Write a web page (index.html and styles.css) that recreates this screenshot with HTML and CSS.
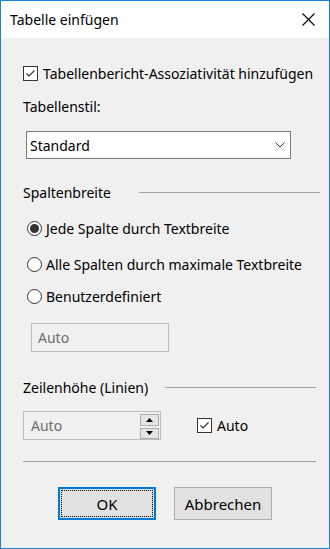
FILE: index.html
```html
<!DOCTYPE html>
<html lang="de">
  <head>
    <meta charset="UTF-8" />
    <title>Tabelle einfügen</title>
    <link rel="stylesheet" href="styles.css">
  </head>
  <body>
    <div class="window">
      <!-- Titelleiste -->
      <div class="titlebar">
        <span class="title">Tabelle einfügen</span>
        <svg class="close" width="13" height="13" viewBox="0 0 13 13">
          <path d="M0.5 0.5L12.5 12.5M12.5 0.5L0.5 12.5" stroke="#000" stroke-width="1.1" fill="none" />
        </svg>
      </div>

      <div class="content">
        <label class="check row-assoc">
          <span class="box">
            <svg width="13" height="13" viewBox="0 0 13 13"><path d="M2.5 6.5L5 9L10.5 3.5" stroke="#333" stroke-width="1.2" fill="none" /></svg>
          </span>
          Tabellenbericht-Assoziativität hinzufügen
        </label>

        <div class="label row-style">Tabellenstil:</div>

        <div class="select">
          <span>Standard</span>
          <svg width="10" height="6" viewBox="0 0 10 6"><path d="M0.5 0.5L5 5L9.5 0.5" stroke="#333" stroke-width="1" fill="none" /></svg>
        </div>

        <div class="group-title group-cols">
          <span>Spaltenbreite</span>
          <i class="rule"></i>
        </div>

        <label class="radio r1"><span class="circle checked"></span>Jede Spalte durch Textbreite</label>
        <label class="radio r2"><span class="circle"></span>Alle Spalten durch maximale Textbreite</label>
        <label class="radio r3"><span class="circle"></span>Benutzerdefiniert</label>

        <div class="field">Auto</div>

        <div class="group-title group-rows">
          <span>Zeilenhöhe (Linien)</span>
          <i class="rule"></i>
        </div>

        <div class="spin-row">
          <div class="spin">
            <span>Auto</span>
            <div class="spin-btns">
              <span class="spin-btn up"><svg width="7" height="4" viewBox="0 0 7 4"><path d="M0 4L3.5 0L7 4Z" fill="#000" /></svg></span>
              <span class="spin-btn down"><svg width="7" height="4" viewBox="0 0 7 4"><path d="M0 0L3.5 4L7 0Z" fill="#000" /></svg></span>
            </div>
          </div>
          <label class="check check-auto">
            <span class="box">
              <svg width="13" height="13" viewBox="0 0 13 13"><path d="M2.5 6.5L5 9L10.5 3.5" stroke="#333" stroke-width="1.2" fill="none" /></svg>
            </span>
            Auto
          </label>
        </div>

        <div class="separator"></div>
      </div>

      <div class="footer">
        <button class="btn btn-default">OK</button>
        <button class="btn">Abbrechen</button>
      </div>
    </div>
  </body>
</html>
```

FILE: styles.css
```css
body {
  margin: 0;
  font-family: "Noto Sans", "Open Sans", sans-serif;
  font-size: 14px;
  color: #000;
  background: #f0f0f0;
}
.window {
  width: 330px;
  height: 549px;
  box-sizing: border-box;
  border: 1px solid #1883d7; /* aktiver Fensterrahmen */
  background: #f0f0f0;
}
.titlebar {
  height: 37px;
  background: #fff;
  display: flex;
  align-items: center;
  justify-content: space-between;
  padding: 0 14px 0 9px;
}
.title {
  font-size: 14px;
}
.content {
  padding-left: 22px;
}

/* Kontrollkästchen */
.check {
  display: flex;
  align-items: center;
  height: 22px;
}
.box {
  width: 15px;
  height: 15px;
  box-sizing: border-box;
  border: 1px solid #333;
  background: #fff;
  display: flex;
  align-items: center;
  justify-content: center;
  margin-right: 5px;
}
.row-assoc {
  margin-top: 24px;
}
.label {
  height: 22px;
  line-height: 22px;
}
.row-style {
  margin-top: 12px;
}

/* Auswahlliste */
.select {
  margin: 13px 0 0 3px;
  width: 265px;
  height: 28px;
  box-sizing: border-box;
  border: 1px solid #7a7a7a;
  background: #fff;
  display: flex;
  align-items: center;
  justify-content: space-between;
  padding: 0 5px 0 3px;
}

/* Gruppentitel mit Linie */
.group-title {
  display: flex;
  align-items: center;
  height: 22px;
}
.group-title .rule {
  height: 1px;
  background: #a0a0a0;
}
.group-cols {
  margin-top: 22px;
}
.group-cols span {
  width: 116px;
}
.group-cols .rule {
  width: 181px;
}
.group-rows {
  margin-top: 24px;
}
.group-rows span {
  width: 142px;
}
.group-rows .rule {
  width: 151px;
}

/* Optionsfelder */
.radio {
  display: flex;
  align-items: center;
  height: 22px;
  padding-left: 4px;
}
.circle {
  width: 15px;
  height: 15px;
  box-sizing: border-box;
  border: 1px solid #333;
  border-radius: 50%;
  background: #fff;
  margin-right: 4px;
  display: flex;
  align-items: center;
  justify-content: center;
}
.circle.checked::after {
  content: "";
  width: 9px;
  height: 9px;
  border-radius: 50%;
  background: #333;
}
.r1 {
  margin-top: 14px;
}
.r2 {
  margin-top: 14px;
}
.r3 {
  margin-top: 10px;
}

/* deaktivierte Felder */
.field {
  margin: 16px 0 0 8px;
  width: 138px;
  height: 29px;
  box-sizing: border-box;
  border: 1px solid #bcbcbc;
  padding-left: 6px;
  line-height: 27px;
  color: #6d6d6d;
}
.spin-row {
  display: flex;
  align-items: center;
  margin-top: 13px;
}
.spin {
  width: 138px;
  height: 29px;
  box-sizing: border-box;
  border: 1px solid #bcbcbc;
  padding: 1px 1px 1px 7px;
  display: flex;
  align-items: center;
  justify-content: space-between;
  color: #6d6d6d;
}
.spin-btns {
  display: flex;
  flex-direction: column;
  gap: 2px;
  padding-top: 1px;
}
.spin-btn {
  width: 19px;
  box-sizing: border-box;
  border: 1px solid #adadad;
  background: #e5e5e5;
  display: flex;
  align-items: center;
  justify-content: center;
}
.up {
  height: 12px;
}
.down {
  height: 11px;
}
.check-auto {
  margin-left: 36px;
}

.separator {
  margin-top: 21px;
  width: 293px;
  height: 1px;
  background: #a0a0a0;
}

/* Schaltflächen */
.footer {
  display: flex;
  justify-content: center;
  gap: 18px;
  margin-top: 25px;
}
.btn {
  width: 98px;
  height: 33px;
  box-sizing: border-box;
  border: 1px solid #adadad;
  background: #e1e1e1;
  font-family: inherit;
  font-size: 15px;
  color: #000;
  padding: 0;
}
.btn-default {
  border: 2px solid #0078d7;
  outline: 1px dotted #000;
  outline-offset: -4px;
}
```
